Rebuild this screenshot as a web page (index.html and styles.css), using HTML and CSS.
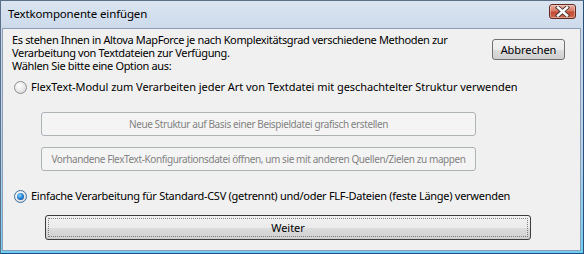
FILE: index.html
```html
<!DOCTYPE html>
<html lang="de">
<head>
<meta charset="utf-8">
<title>Textkomponente einfügen</title>
<link rel="stylesheet" href="styles.css">
</head>
<body>
<div class="window">
  <div class="titlebar">
    <span class="title">Textkomponente einfügen</span>
    <button class="close" type="button" aria-label="Schließen">
      <svg width="15" height="11" viewBox="0 0 15 11">
        <path d="M3 1.5 L12 9.5 M12 1.5 L3 9.5" stroke="#4a3a3a" stroke-width="4.2" stroke-linecap="square" fill="none"/>
        <path d="M3 1.5 L12 9.5 M12 1.5 L3 9.5" stroke="#ffffff" stroke-width="2.4" stroke-linecap="square" fill="none"/>
      </svg>
    </button>
  </div>
  <div class="client">
    <div class="intro">
      <p class="intro-text">Es stehen Ihnen in Altova MapForce je nach Komplexitätsgrad verschiedene Methoden zur<br>Verarbeitung von Textdateien zur Verfügung.<br>Wählen Sie bitte eine Option aus:</p>
      <button class="btn cancel" type="button">Abbrechen</button>
    </div>
    <label class="radio-row first">
      <span class="radio"></span>
      <span>FlexText-Modul zum Verarbeiten jeder Art von Textdatei mit geschachtelter Struktur verwenden</span>
    </label>
    <div class="sub-buttons">
      <button class="btn disabled" type="button">Neue Struktur auf Basis einer Beispieldatei grafisch erstellen</button>
      <button class="btn disabled" type="button">Vorhandene FlexText-Konfigurationsdatei öffnen, um sie mit anderen Quellen/Zielen zu mappen</button>
    </div>
    <label class="radio-row second">
      <span class="radio checked"></span>
      <span class="tight">Einfache Verarbeitung für Standard-CSV (getrennt) und/oder FLF-Dateien (feste Länge) verwenden</span>
    </label>
    <button class="btn default" type="button"><span class="focus">Weiter</span></button>
  </div>
</div>
</body>
</html>
```
FILE: styles.css
```css
* { box-sizing: border-box; }
html, body { margin: 0; padding: 0; }
body {
  width: 584px;
  height: 254px;
  font-family: "Noto Sans", "Open Sans", sans-serif;
  font-size: 11px;
  letter-spacing: -0.05px;
  color: #000;
  overflow: hidden;
  white-space: nowrap;
}
.window {
  width: 584px;
  height: 254px;
  display: flex;
  flex-direction: column;
  border: 1px solid #5a6f88;
  border-bottom-color: #1d4f86;
  border-right-color: #2a4f7a;
  background: linear-gradient(#dbe5f1 0, #cbd9ea 30px, #b7d2ec 60%, #6fcdf2 100%);
}
.titlebar {
  height: 27px;
  flex: none;
  display: flex;
  align-items: flex-start;
  justify-content: space-between;
  padding: 0 7px 0 7px;
}
.title {
  margin-top: 5px;
  font-size: 11.5px;
  letter-spacing: -0.15px;
  line-height: 16px;
  color: #000;
}
.close {
  margin-top: 3px;
  width: 27px;
  height: 15px;
  padding: 0;
  border: 1px solid #5e2a22;
  border-radius: 3px;
  background: linear-gradient(#eab0a2 0, #d87a66 45%, #c24a33 55%, #cf6a50 100%);
  box-shadow: inset 0 0 0 1px rgba(255,255,255,0.35);
  display: flex;
  align-items: center;
  justify-content: center;
}
.client {
  flex: 1;
  margin: 0 2px 2px 1px;
  border: 1px solid #8d9fb6;
  background: #f0f0f0;
  padding: 4px 0 0 9px;
  display: flex;
  flex-direction: column;
  align-items: flex-start;
}
.intro {
  display: flex;
  width: 100%;
  justify-content: space-between;
  align-items: flex-start;
}
.intro-text {
  margin: 0;
  line-height: 13px;
  letter-spacing: -0.35px;
}
.btn {
  font-family: inherit;
  font-size: 11px;
  letter-spacing: -0.05px;
  color: #000;
  border: 1px solid #707070;
  border-radius: 3px;
  background: linear-gradient(#f2f2f2 0, #ebebeb 50%, #dddddd 50%, #cfcfcf 100%);
  padding: 0;
  white-space: nowrap;
}
.cancel {
  width: 73px;
  height: 21px;
  margin: 6px 15px 0 0;
  line-height: 18px;
}
.radio-row {
  display: flex;
  align-items: center;
  gap: 4px;
  height: 16px;
  line-height: 16px;
  margin-left: 2px;
}
.radio-row.first { margin-top: 7px; }
.radio-row.second { margin-top: 17px; }
.tight { letter-spacing: -0.28px; }
.radio {
  width: 13px;
  height: 13px;
  border-radius: 50%;
  border: 1px solid #8e8f8f;
  background: radial-gradient(circle at 40% 35%, #ffffff 0, #eaeaea 50%, #cfcfcf 100%);
  display: flex;
  align-items: center;
  justify-content: center;
  flex: none;
}
.radio.checked {
  border-color: #3c6fa0;
}
.radio.checked::after {
  content: "";
  width: 7px;
  height: 7px;
  border-radius: 50%;
  background: radial-gradient(circle at 40% 35%, #8fd8ff 0, #2a86d8 45%, #0b3f86 100%);
}
.sub-buttons {
  margin: 17px 0 0 29px;
  display: flex;
  flex-direction: column;
  gap: 11px;
}
.btn.disabled {
  width: 435px;
  height: 24px;
  border-color: #adb2b5;
  background: #f4f4f4;
  color: #838383;
  font-size: 10px;
  letter-spacing: -0.4px;
}
.btn.default {
  margin: 11px 0 0 33px;
  width: 486px;
  height: 25px;
  border-color: #3c3c3c;
  padding: 2px;
  display: flex;
}
.focus {
  flex: 1;
  border: 1px dotted #808080;
  display: flex;
  align-items: center;
  justify-content: center;
}
```
